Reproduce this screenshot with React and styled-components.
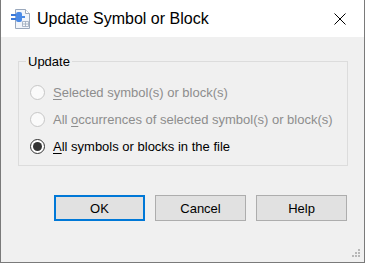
import React from "react";
import styled, { createGlobalStyle } from "styled-components";

const GlobalStyle = createGlobalStyle`
  html, body {
    margin: 0;
    padding: 0;
    background: #f0f0f0;
  }
  body {
    font-family: "Liberation Sans", Arial, sans-serif;
  }
`;

const Window = styled.div`
  box-sizing: border-box;
  width: 365px;
  height: 263px;
  display: flex;
  flex-direction: column;
  background: #f0f0f0;
  border-left: 1px solid #7a7a7a;
  border-right: 1px solid #7a7a7a;
  border-bottom: 1px solid #7a7a7a;
  position: relative;
`;

const TitleBar = styled.div`
  height: 37px;
  flex: none;
  display: flex;
  align-items: center;
  background: #ffffff;
  padding-left: 10px;
`;

const Title = styled.div`
  margin-left: 6px;
  font-size: 16px;
  color: #000;
  padding-top: 1px;
`;

const CloseButton = styled.div`
  margin-left: auto;
  width: 46px;
  height: 37px;
  display: flex;
  align-items: center;
  justify-content: center;
  margin-right: 1px;
`;

const Body = styled.div`
  flex: 1;
  padding: 17px 16px 0 17px;
  display: flex;
  flex-direction: column;
`;

const Group = styled.fieldset`
  margin: 0;
  border: 1px solid #dcdcdc;
  padding: 10px 0 5px 11px;
  display: flex;
  flex-direction: column;
`;

const Legend = styled.legend`
  font-size: 13px;
  color: #000;
  padding: 0 2px;
  margin-left: -4px;
  line-height: 15px;
`;

const Option = styled.label`
  display: flex;
  align-items: center;
  height: 27px;
  font-size: 13px;
  color: ${p => (p.disabled ? "#8d8d8d" : "#000")};
`;

const RadioCircle = styled.span`
  box-sizing: border-box;
  width: 15px;
  height: 15px;
  border-radius: 50%;
  border: 1px solid ${p => (p.disabled ? "#c6c6c6" : "#333333")};
  background: ${p => (p.disabled ? "#fafafa" : "#ffffff")};
  margin-right: 8px;
  display: flex;
  align-items: center;
  justify-content: center;
  flex: none;

  &::after {
    content: "";
    display: ${p => (p.checked ? "block" : "none")};
    width: 9px;
    height: 9px;
    border-radius: 50%;
    background: #333333;
  }
`;

const Key = styled.span`
  text-decoration: underline;
  text-underline-offset: 2px;
`;

const ButtonRow = styled.div`
  display: flex;
  justify-content: flex-end;
  gap: 10px;
  margin-top: 29px;
  padding-right: 1px;
`;

const Button = styled.div`
  box-sizing: border-box;
  width: 91px;
  height: 26px;
  display: flex;
  align-items: center;
  justify-content: center;
  font-size: 13px;
  color: #000;
  background: #e1e1e1;
  border: ${p => (p.primary ? "2px solid #0078d7" : "1px solid #adadad")};
`;

const Grip = styled.svg`
  position: absolute;
  right: 3px;
  bottom: 3px;
`;

function AppIcon() {
  return (
    <svg width="20" height="21" viewBox="0 0 20 21">
      <path d="M4.5 1.5h10l4 4v15h-14z" fill="#f1f5fb" stroke="#9aa8bc" />
      <path d="M14.5 1.5v4h4" fill="#ffffff" stroke="#9aa8bc" />
      <rect x="0" y="6" width="5" height="2" fill="#3a78d8" />
      <rect x="0" y="10" width="5" height="2" fill="#3a78d8" />
      <rect x="5" y="4" width="6" height="10" rx="2" fill="#4a8ae6" />
      <rect x="11" y="8" width="3" height="2" fill="#4a8ae6" />
      <path d="M11.5 13.5h6v5h-6zM11.5 16h6M14.5 13.5v5" fill="#f6f8fb" stroke="#9aa8bc" strokeWidth="0.8" />
    </svg>
  );
}

function App() {
  return (
    <>
      <GlobalStyle />
      <Window>
        <TitleBar>
          <AppIcon />
          <Title>Update Symbol or Block</Title>
          <CloseButton>
            <svg width="12" height="12" viewBox="0 0 12 12">
              <path d="M0.5 0.5l11 11M11.5 0.5l-11 11" stroke="#000" strokeWidth="1" />
            </svg>
          </CloseButton>
        </TitleBar>
        <Body>
          <Group>
            <Legend>Update</Legend>
            <Option disabled>
              <RadioCircle disabled />
              <span>
                <Key>S</Key>elected symbol(s) or block(s)
              </span>
            </Option>
            <Option disabled>
              <RadioCircle disabled />
              <span>
                All <Key>o</Key>ccurrences of selected symbol(s) or block(s)
              </span>
            </Option>
            <Option>
              <RadioCircle checked />
              <span>
                <Key>A</Key>ll symbols or blocks in the file
              </span>
            </Option>
          </Group>
          <ButtonRow>
            <Button primary>OK</Button>
            <Button>Cancel</Button>
            <Button>Help</Button>
          </ButtonRow>
        </Body>
        <Grip width="10" height="10" viewBox="0 0 10 10">
          <g fill="#b8b8b8">
            <rect x="7" y="0" width="2" height="2" />
            <rect x="4" y="3" width="2" height="2" />
            <rect x="7" y="3" width="2" height="2" />
            <rect x="1" y="6" width="2" height="2" />
            <rect x="4" y="6" width="2" height="2" />
            <rect x="7" y="6" width="2" height="2" />
          </g>
        </Grip>
      </Window>
    </>
  );
}

export default App;
